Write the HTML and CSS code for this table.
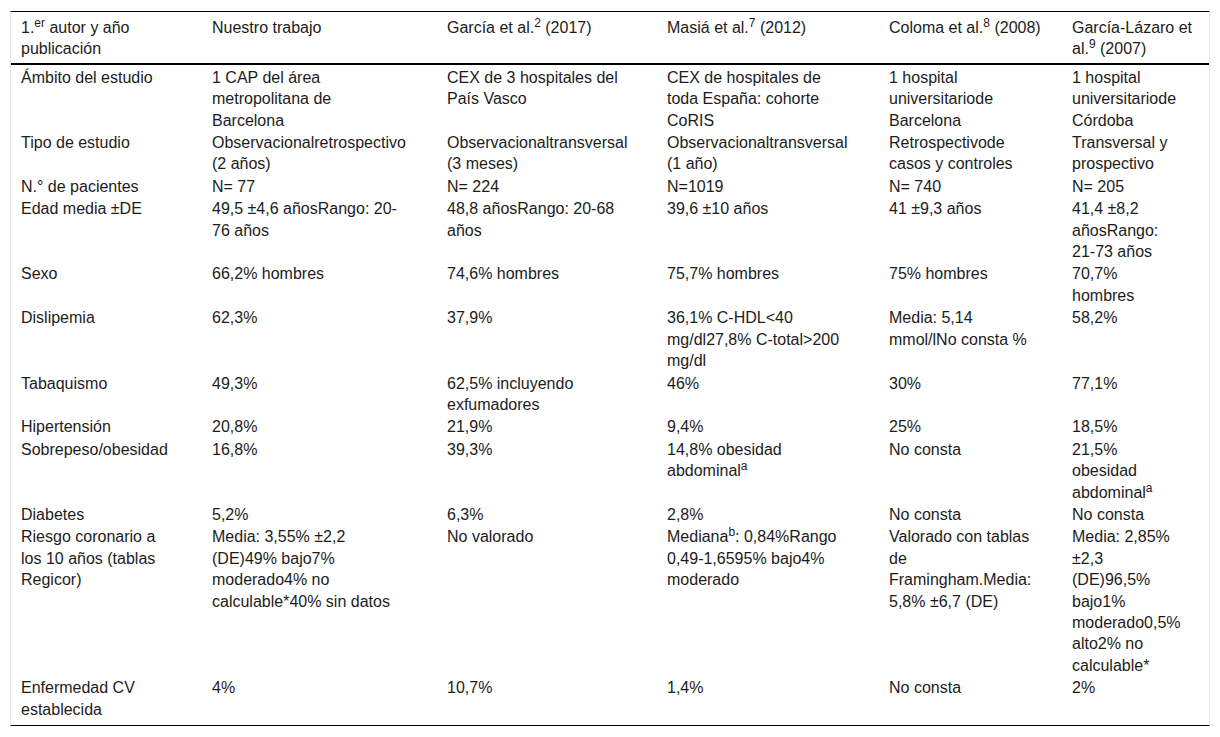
FILE: index.html
```html
<!DOCTYPE html>
<html lang="es">
<head>
<meta charset="utf-8">
<title>Tabla comparativa</title>
<link rel="stylesheet" href="styles.css">
</head>
<body>
<div class="wrap">
<table class="data">
  <colgroup>
    <col class="c1"><col class="c2"><col class="c3"><col class="c4"><col class="c5"><col class="c6">
  </colgroup>
  <thead>
    <tr>
      <th>1.<sup>er</sup> autor y año<br>publicación</th>
      <th>Nuestro trabajo</th>
      <th>García et al.<sup>2</sup> (2017)</th>
      <th>Masiá et al.<sup>7</sup> (2012)</th>
      <th>Coloma et al.<sup>8</sup> (2008)</th>
      <th>García-Lázaro et<br>al.<sup>9</sup> (2007)</th>
    </tr>
  </thead>
  <tbody>
    <tr class="first">
      <td>Ámbito del estudio</td>
      <td>1 CAP del área<br>metropolitana de<br>Barcelona</td>
      <td>CEX de 3 hospitales del<br>País Vasco</td>
      <td>CEX de hospitales de<br>toda España: cohorte<br>CoRIS</td>
      <td>1 hospital<br>universitariode<br>Barcelona</td>
      <td>1 hospital<br>universitariode<br>Córdoba</td>
    </tr>
    <tr>
      <td>Tipo de estudio</td>
      <td>Observacionalretrospectivo<br>(2 años)</td>
      <td>Observacionaltransversal<br>(3 meses)</td>
      <td>Observacionaltransversal<br>(1 año)</td>
      <td>Retrospectivode<br>casos y controles</td>
      <td>Transversal y<br>prospectivo</td>
    </tr>
    <tr>
      <td>N.° de pacientes</td>
      <td>N= 77</td>
      <td>N= 224</td>
      <td>N=1019</td>
      <td>N= 740</td>
      <td>N= 205</td>
    </tr>
    <tr>
      <td>Edad media ±DE</td>
      <td>49,5 ±4,6 añosRango: 20-<br>76 años</td>
      <td>48,8 añosRango: 20-68<br>años</td>
      <td>39,6 ±10 años</td>
      <td>41 ±9,3 años</td>
      <td>41,4 ±8,2<br>añosRango:<br>21-73 años</td>
    </tr>
    <tr>
      <td>Sexo</td>
      <td>66,2% hombres</td>
      <td>74,6% hombres</td>
      <td>75,7% hombres</td>
      <td>75% hombres</td>
      <td>70,7%<br>hombres</td>
    </tr>
    <tr>
      <td>Dislipemia</td>
      <td>62,3%</td>
      <td>37,9%</td>
      <td>36,1% C-HDL&lt;40<br>mg/dl27,8% C-total&gt;200<br>mg/dl</td>
      <td>Media: 5,14<br>mmol/lNo consta %</td>
      <td>58,2%</td>
    </tr>
    <tr>
      <td>Tabaquismo</td>
      <td>49,3%</td>
      <td>62,5% incluyendo<br>exfumadores</td>
      <td>46%</td>
      <td>30%</td>
      <td>77,1%</td>
    </tr>
    <tr>
      <td>Hipertensión</td>
      <td>20,8%</td>
      <td>21,9%</td>
      <td>9,4%</td>
      <td>25%</td>
      <td>18,5%</td>
    </tr>
    <tr>
      <td>Sobrepeso/obesidad</td>
      <td>16,8%</td>
      <td>39,3%</td>
      <td>14,8% obesidad<br>abdominal<sup>a</sup></td>
      <td>No consta</td>
      <td>21,5%<br>obesidad<br>abdominal<sup>a</sup></td>
    </tr>
    <tr>
      <td>Diabetes</td>
      <td>5,2%</td>
      <td>6,3%</td>
      <td>2,8%</td>
      <td>No consta</td>
      <td>No consta</td>
    </tr>
    <tr>
      <td>Riesgo coronario a<br>los 10 años (tablas<br>Regicor)</td>
      <td>Media: 3,55% ±2,2<br>(DE)49% bajo7%<br>moderado4% no<br>calculable*40% sin datos</td>
      <td>No valorado</td>
      <td>Mediana<sup>b</sup>: 0,84%Rango<br>0,49-1,6595% bajo4%<br>moderado</td>
      <td>Valorado con tablas<br>de<br>Framingham.Media:<br>5,8% ±6,7 (DE)</td>
      <td>Media: 2,85%<br>±2,3<br>(DE)96,5%<br>bajo1%<br>moderado0,5%<br>alto2% no<br>calculable*</td>
    </tr>
    <tr class="last">
      <td>Enfermedad CV<br>establecida</td>
      <td>4%</td>
      <td>10,7%</td>
      <td>1,4%</td>
      <td>No consta</td>
      <td>2%</td>
    </tr>
  </tbody>
</table>
</div>
</body>
</html>
```

FILE: styles.css
```css
html, body {
  margin: 0;
  padding: 0;
  background: #ffffff;
}

.wrap {
  padding: 11px 10px 10px 10px;
}

.data {
  width: 1200px;
  table-layout: fixed;
  border-collapse: separate;
  border-spacing: 0;
  border: 1px solid #e8e8e8;
  border-top-color: #000000;
  border-bottom-color: #000000;
  font-family: "Liberation Sans", Arial, sans-serif;
  font-size: 16px;
  line-height: 21.4px;
  color: #1c1c1c;
}

.c1 { width: 191px; }
.c2 { width: 235px; }
.c3 { width: 220px; }
.c4 { width: 222px; }
.c5 { width: 183px; }
.c6 { width: 147px; }

.data th,
.data td {
  text-align: left;
  vertical-align: top;
  white-space: nowrap;
  font-weight: normal;
}

.data th {
  padding: 5px 10px 3px 10px;
  border-bottom: 2px solid #000000;
}

.data td {
  padding: 1px 10px 0 10px;
}

.data tr.first td {
  padding-top: 2px;
}

.data tr.last td {
  padding-bottom: 5px;
}

.data sup {
  font-size: 12px;
  line-height: 0;
  vertical-align: 6px;
}
```
